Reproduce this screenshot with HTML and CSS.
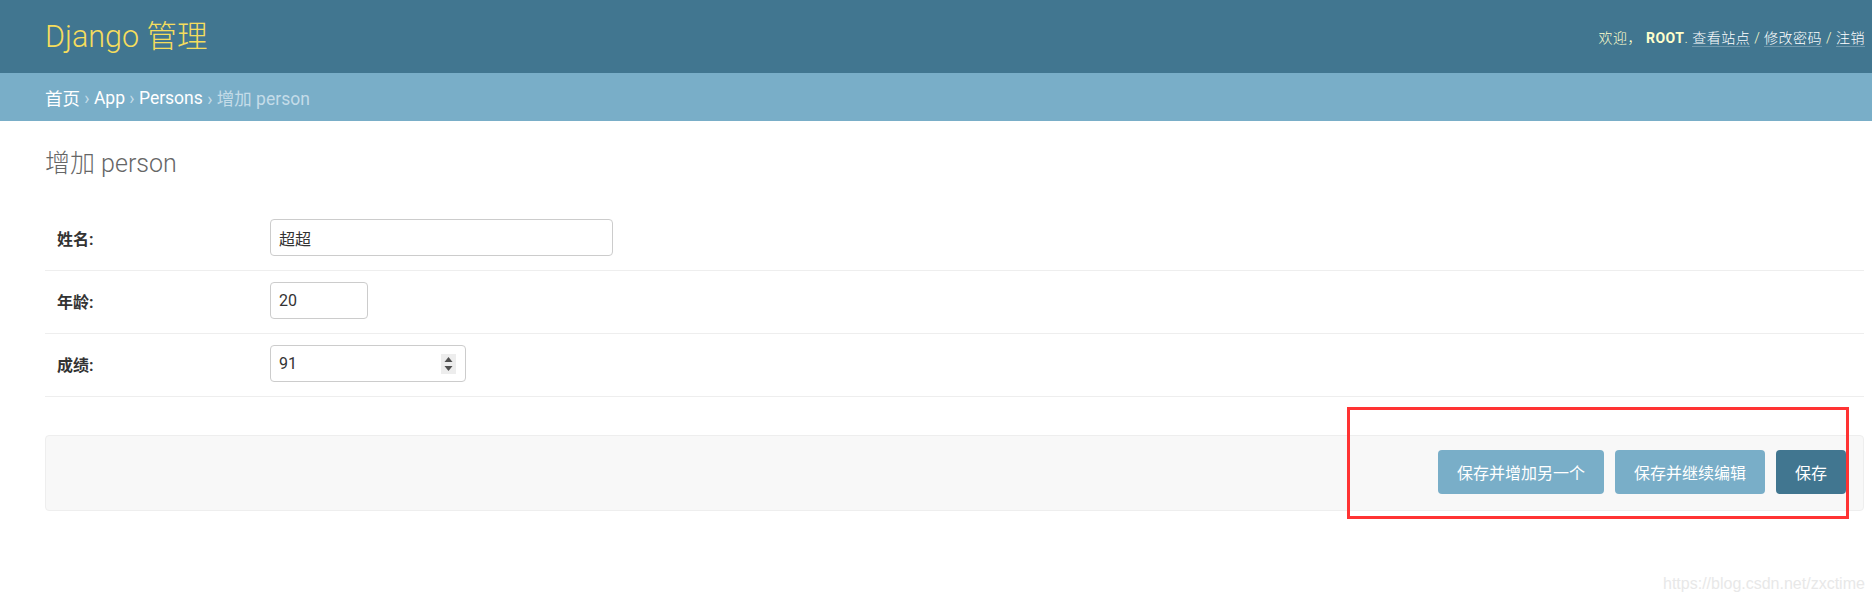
FILE: index.html
```html
<!DOCTYPE html>
<html lang="zh-hans">
<head>
<meta charset="utf-8">
<title>增加 person | Django 站点管理员</title>
<link rel="stylesheet" href="styles.css">
</head>
<body>
<div class="page">
  <header class="header">
    <h1 class="branding">Django 管理</h1>
    <div class="user-tools">欢迎， <strong>root</strong>. <a href="#">查看站点</a> / <a href="#">修改密码</a> / <a href="#">注销</a></div>
  </header>
  <nav class="breadcrumbs"><a href="#">首页</a> › <a href="#">App</a> › <a href="#">Persons</a> › 增加 person</nav>
  <main class="content">
    <h1 class="title">增加 person</h1>
    <form class="form">
      <fieldset class="module">
        <div class="form-row"><label class="label">姓名:</label><input class="field field-long" type="text" value="超超"></div>
        <div class="form-row"><label class="label">年龄:</label><input class="field field-short" type="text" value="20"></div>
        <div class="form-row"><label class="label">成绩:</label><span class="num-field"><input class="num-input" type="text" value="91"><span class="spin"><svg width="15" height="20" viewBox="0 0 15 20"><path d="M7.5 3 L11.5 8 L3.5 8 Z" fill="#505050"/><path d="M7.5 17 L11.5 12 L3.5 12 Z" fill="#505050"/></svg></span></span></div>
      </fieldset>
      <div class="submit-row">
        <button class="btn" type="button">保存并增加另一个</button>
        <button class="btn" type="button">保存并继续编辑</button>
        <button class="btn btn-default" type="button">保存</button>
      </div>
    </form>
  </main>
  <div class="annotation"></div>
  <div class="watermark">https://blog.csdn.net/zxctime</div>
</div>
</body>
</html>
```

FILE: styles.css
```css
* { box-sizing: border-box; }
html, body { margin: 0; padding: 0; background: #fff; }
body {
  font-family: Roboto, "Noto Sans CJK SC", sans-serif;
  color: #333;
  width: 1872px;
  height: 605px;
  overflow: hidden;
}
.page { position: relative; width: 1872px; height: 605px; }

.header {
  height: 73px;
  background: #417690;
  color: #ffc;
  display: flex;
  align-items: center;
  justify-content: space-between;
  padding: 0 7px 0 45px;
}
.branding {
  margin: 0;
  font-size: 30.5px;
  font-weight: 300;
  color: #f5dd5d;
  line-height: 1;
  padding-top: 1px;
}
.user-tools {
  font-size: 14px;
  letter-spacing: 0.5px;
  text-transform: uppercase;
  font-weight: 300;
  color: #ffc;
  white-space: nowrap;
}
.user-tools strong { font-weight: 700; }
.user-tools a {
  color: #fff;
  text-decoration: none;
  border-bottom: 1px solid rgba(255,255,255,0.25);
}

.breadcrumbs {
  height: 48px;
  background: #79aec8;
  color: #c4dce8;
  display: flex;
  align-items: center;
  padding: 1px 45px 0;
  font-size: 17.5px;
  white-space: pre;
}
.breadcrumbs a { color: #fff; text-decoration: none; }

.content { padding: 28px 8px 0 45px; }
.title {
  margin: 0 0 29px;
  font-size: 25px;
  line-height: 30px;
  font-weight: 300;
  color: #666;
}
.form { margin: 0; }
.module { border: 0; margin: 0 0 38px; padding: 0; }
.form-row {
  display: flex;
  align-items: center;
  padding: 11px 12px 14px;
  border-bottom: 1px solid #eee;
}
.label {
  width: 213px;
  flex: none;
  font-size: 16px;
  font-weight: 700;
  color: #333;
}
.field {
  height: 37px;
  border: 1px solid #ccc;
  border-radius: 4px;
  padding: 0 8px;
  font-family: Roboto, "Noto Sans CJK SC", sans-serif;
  font-size: 16px;
  color: #333;
  background: #fff;
  outline: none;
}
.field-long { width: 343px; }
.field-short { width: 98px; }
.num-field {
  display: inline-flex;
  align-items: center;
  width: 196px;
  height: 37px;
  border: 1px solid #ccc;
  border-radius: 4px;
  padding: 0 9px 0 8px;
  background: #fff;
}
.num-input {
  flex: 1;
  min-width: 0;
  border: 0;
  padding: 0;
  height: 35px;
  font-family: Roboto, "Noto Sans CJK SC", sans-serif;
  font-size: 16px;
  color: #333;
  outline: none;
  background: transparent;
}
.spin {
  display: block;
  width: 15px;
  height: 20px;
  background: #ededed;
}
.spin svg { display: block; }

.submit-row {
  display: flex;
  justify-content: flex-end;
  gap: 11px;
  height: 76px;
  padding: 14px 17px 0;
  background: #f8f8f8;
  border: 1px solid #eee;
  border-radius: 4px;
}
.btn {
  height: 44px;
  padding: 0 19px;
  border: 0;
  border-radius: 4px;
  background: #79aec8;
  color: #fff;
  font-family: Roboto, "Noto Sans CJK SC", sans-serif;
  font-size: 16px;
  cursor: pointer;
}
.btn-default { background: #417690; }

.annotation {
  position: absolute;
  left: 1347px;
  top: 407px;
  width: 502px;
  height: 112px;
  border: 3px solid #f33;
}
.watermark {
  position: absolute;
  left: 1663px;
  top: 575px;
  font-family: "Liberation Sans", Arial, sans-serif;
  font-size: 16px;
  color: #e8e8e8;
}
```
